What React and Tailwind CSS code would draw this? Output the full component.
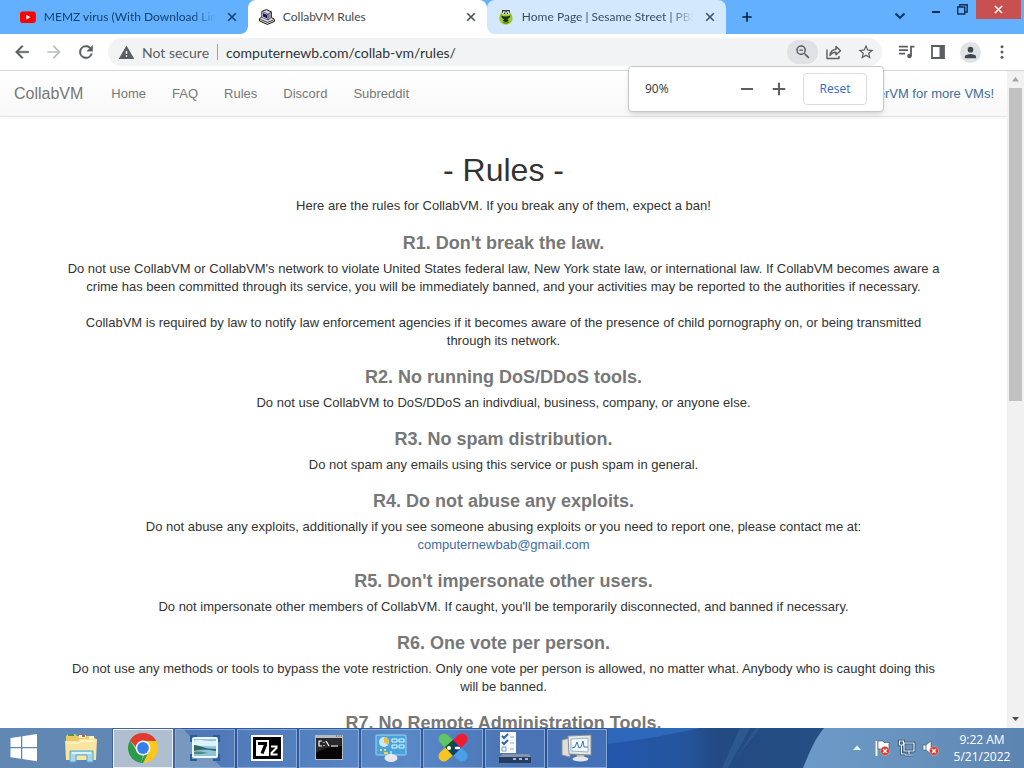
import React from "react";

function Svg({ children, className, size = 16, box = "0 0 24 24" }) {
  return (
    <svg width={size} height={size} viewBox={box} className={className} fill="currentColor" aria-hidden="true">
      {children}
    </svg>
  );
}

const closePath = "M19 6.4 17.6 5 12 10.6 6.4 5 5 6.4 10.6 12 5 17.6 6.4 19 12 13.4 17.6 19 19 17.6 13.4 12z";

function YouTubeIcon() {
  return (
    <svg width="16" height="16" viewBox="0 0 16 16" aria-hidden="true">
      <rect x="0" y="2.5" width="16" height="11.5" rx="2.8" fill="#f00" />
      <path d="M6.4 5.8v4.8l4.2-2.4z" fill="#fff" />
    </svg>
  );
}

function ComputerIcon() {
  return (
    <svg width="16" height="16" viewBox="0 0 16 16" aria-hidden="true">
      <path d="M1.600 8.800 3 8V2.300L7.500.5l5 2.300v5.700l3 1.700v2.300L8.500 15.500.5 12V9.500z" fill="#d9d6d0" stroke="#14141c" strokeWidth="1" />
      <path d="M3 2.400 9 5v6L3 8.300z" fill="#f2f1ec" stroke="#222" strokeWidth=".6" />
      <path d="M4 3.900 8.200 5.700v3.700L4 7.600z" fill="#14108c" />
      <path d="M9 5l3.500-2v5.500L9 11z" fill="#9a98a5" stroke="#222" strokeWidth=".5" />
      <path d="m1.500 10.500 7 3 6-2.500" fill="none" stroke="#33323a" strokeWidth=".9" />
    </svg>
  );
}

function SesameIcon() {
  return (
    <svg width="16" height="16" viewBox="0 0 16 16" aria-hidden="true">
      <circle cx="8" cy="9" r="6.8" fill="#9cc62b" />
      <path d="M4 1h8v3H4z" fill="#26382a" />
      <circle cx="6.2" cy="4" r="1.700" fill="#fff" />
      <circle cx="9.8" cy="4" r="1.700" fill="#fff" />
      <circle cx="6.5" cy="4.2" r=".8" />
      <circle cx="9.5" cy="4.2" r=".8" />
      <path d="M3.400 6.400c3 1.600 6.200 1.600 9.200-.2-.2 2.400-1.400 3.400-3.400 3.800 1.200.6 1.600 1.400 1.200 2.400-1.400 1.200-4.400.8-5.600-.8 1-.2 1.600-.6 1.400-1.200-1.600-.6-2.600-1.800-2.800-4z" fill="#1c3415" />
      <path d="M5.400 13.600c2 .8 4 .6 5.600-.4" stroke="#3f6c13" fill="none" />
    </svg>
  );
}

function Tab({ icon, title, style, fade }) {
  return (
    <div className={"flex h-[34px] w-[239px] shrink-0 items-center gap-2 pl-[11px] pr-2 font-['Lato','Open_Sans',sans-serif] text-[12px] " + style}>
      {icon}
      <span className={"w-[174px] overflow-hidden whitespace-nowrap " + (fade ? "[mask-image:linear-gradient(to_right,black_86%,transparent)]" : "")}>
        {title}
      </span>
      <button aria-label={"Close " + title} className="ml-auto flex size-4 items-center justify-center">
        <Svg size={14}><path d={closePath} stroke="currentColor" strokeWidth=".8" /></Svg>
      </button>
    </div>
  );
}

function TabStrip() {
  return (
    <header className="flex h-[34px] shrink-0 bg-[#62b0fe] text-[#12365c]">
      <div className="flex w-[248px] shrink-0 bg-white">
        <div className="flex w-full rounded-br-lg bg-[#62b0fe]">
          <Tab icon={<YouTubeIcon />} title="MEMZ virus (With Download Link)" fade style="ml-[9px] text-[#12406f]" />
        </div>
      </div>
      <Tab icon={<ComputerIcon />} title="CollabVM Rules" style="rounded-t-lg bg-white text-[#45494d]" />
      <div className="flex shrink-0 bg-linear-to-b from-[#62b0fe] from-50% to-white to-50%">
        <Tab icon={<SesameIcon />} title="Home Page | Sesame Street | PBS KIDS" fade style="rounded-t-lg rounded-bl-lg bg-[#d3e8fd] text-[#3b4d60]" />
      </div>
      <button aria-label="New tab" className="ml-[13px] flex w-4 items-center justify-center text-[#0b2039]">
        <Svg size={20}><path d="M19 13.2h-5.8V19h-2.4v-5.8H5v-2.4h5.8V5h2.4v5.8H19z" /></Svg>
      </button>
      <div className="ml-auto flex items-start">
        <button aria-label="Search tabs" className="flex h-8 w-6 items-center justify-center text-[#0f3868]">
          <svg width="12" height="8" viewBox="0 0 12 8" fill="none" stroke="currentColor" strokeWidth="2" aria-hidden="true"><path d="m1.5 1.5 4.5 4.3 4.5-4.3" /></svg>
        </button>
        <button aria-label="Minimize" className="ml-3 flex h-6 w-6 items-center justify-center">
          <span className="h-[2px] w-2 bg-[#102f52]" />
        </button>
        <button aria-label="Restore" className="flex h-[18px] w-7 items-center justify-center text-[#102f52]">
          <svg width="11" height="11" viewBox="0 0 11 11" fill="none" stroke="currentColor" strokeWidth="1.4" aria-hidden="true"><path d="M.7 3h7v7h-7zM2.8 3V.8h7.4V8H7.8" /></svg>
        </button>
        <button aria-label="Close" className="mr-[3px] flex h-[19px] w-[45px] items-center justify-center bg-[#c75050] text-white">
          <Svg size={13}><path d={closePath} stroke="currentColor" /></Svg>
        </button>
      </div>
    </header>
  );
}

function Toolbar() {
  const btn = "flex size-8 shrink-0 items-center justify-center";
  return (
    <div className="flex h-[37px] shrink-0 items-center border-b border-[#d5d6d8] bg-white pl-[6px] pr-[6px] text-[#5a5e62]">
      <button aria-label="Back" className={btn}><Svg size={20}><path d="M20 11H7.8l5.6-5.6L12 4l-8 8 8 8 1.4-1.4L7.8 13H20z" stroke="currentColor" strokeWidth=".5" /></Svg></button>
      <button aria-label="Forward" className={btn + " text-[#babcbe]"}><Svg size={20}><path d="m12 4-1.4 1.4 5.6 5.6H4v2h12.2l-5.6 5.6L12 20l8-8z" /></Svg></button>
      <button aria-label="Reload" className={btn}><Svg size={20}><path d="M17.6 6.4A8 8 0 1 0 19.7 14h-2.1A6 6 0 1 1 12 6c1.7 0 3.1.7 4.2 1.8L13 11h7V4z" stroke="currentColor" strokeWidth=".5" /></Svg></button>
      <div className="ml-[6px] flex h-7 min-w-0 flex-1 items-center rounded-full bg-[#f1f3f4] pl-[10px] font-['Lato','Open_Sans',sans-serif] text-[14px]">
        <Svg size={17}><path fillRule="evenodd" d="M1 21h22L12 2zm12-3h-2v-2h2zm0-4h-2v-4h2z" /></Svg>
        <span className="ml-[7px] whitespace-nowrap">Not secure</span>
        <span className="mx-2 h-4 w-px bg-[#9aa0a6]" />
        <input aria-label="Address" defaultValue="computernewb.com/collab-vm/rules/" className="min-w-0 flex-1 bg-transparent text-[#303336] outline-none" />
        <button aria-label="Zoom" className="flex h-6 w-[31px] items-center justify-center rounded-full bg-[#dfe1e4]">
          <Svg size={18}><path d="M15.5 14h-.8l-.3-.3A6.5 6.5 0 1 0 13.7 14.4l.3.3v.8l5 5 1.5-1.5zm-6 0a4.5 4.5 0 1 1 0-9 4.500 4.500 0 0 1 0 9zM7 8.800h5v1.400H7z" /></Svg>
        </button>
        <button aria-label="Share" className={btn}>
          <svg width="16" height="16" viewBox="0 0 16 16" fill="none" stroke="currentColor" strokeWidth="1.400" aria-hidden="true"><path d="M1 5.500v9h12V12M4 11.500c.4-4 2.500-6 6-6.300V2.500l4.500 4.200L10 10.800V8.300c-3 0-4.600 1-6 3.200z" strokeLinejoin="round" /></svg>
        </button>
        <button aria-label="Bookmark" className={btn}>
          <Svg size={18}><path d="m22 9.240-7.190-.620L12 2 9.190 8.630 2 9.240l5.460 4.730L5.820 21 12 17.270 18.180 21l-1.630-7.030zM12 15.400l-3.760 2.270 1-4.280-3.320-2.880 4.380-.380L12 6.100l1.710 4.040 4.380.38-3.320 2.880 1 4.280z" /></Svg>
        </button>
      </div>
      <button aria-label="Media" className="ml-2 flex size-8 items-center justify-center">
        <svg width="17" height="14" viewBox="0 0 17 14" aria-hidden="true"><path d="M1 1.700h9M1 5.200h9M1 8.700h6M13 11V1.700h3.500" stroke="currentColor" strokeWidth="1.800" fill="none" /><circle cx="11.500" cy="11" r="2.300" fill="currentColor" /></svg>
      </button>
      <button aria-label="Side panel" className={btn}>
        <svg width="14" height="14" viewBox="0 0 14 14" aria-hidden="true"><path d="M1 1h12v12H1z" fill="none" stroke="currentColor" strokeWidth="1.800" /><path d="M8.500 1H13v12H8.500z" fill="currentColor" /></svg>
      </button>
      <button aria-label="Profile" className={btn}>
        <span className="flex size-[21px] items-center justify-center rounded-full bg-[#dfe3e7] text-[#43484f]"><Svg size={17}><path d="M12 12a4 4 0 1 0 0-8 4 4 0 0 0 0 8zm0 2c-2.700 0-8 1.300-8 4v2h16v-2c0-2.700-5.300-4-8-4z" /></Svg></span>
      </button>
      <button aria-label="Menu" className={btn}><Svg size={18}><circle cx="12" cy="5" r="2" /><circle cx="12" cy="12" r="2" /><circle cx="12" cy="19" r="2" /></Svg></button>
    </div>
  );
}

function ZoomBubble() {
  return (
    <div className="absolute right-[140px] top-[66px] z-10 flex h-[46px] w-64 items-center rounded-[4px] border border-[#c4c6c8] bg-white pl-4 pr-4 text-xs text-[#303236] shadow-md">
      <span>90%</span>
      <button aria-label="Zoom out" className="ml-auto flex size-8 items-center justify-center"><span className="h-[2px] w-3 bg-[#5a5e62]" /></button>
      <button aria-label="Zoom in" className="mr-2 flex size-8 items-center justify-center text-[#5a5e62]"><Svg size={20}><path d="M19.500 13.200h-6.300v6.300h-2.400v-6.300H4.500v-2.400h6.300V4.500h2.400v6.300h6.300z" /></Svg></button>
      <button className="h-8 w-16 rounded-[4px] border border-[#dadce0] text-[#3068cc]">Reset</button>
    </div>
  );
}

const rules = [
  ["R1. Don't break the law.", [
    "Do not use CollabVM or CollabVM's network to violate United States federal law, New York state law, or international law. If CollabVM becomes aware a crime has been committed through its service, you will be immediately banned, and your activities may be reported to the authorities if necessary.",
    "CollabVM is required by law to notify law enforcement agencies if it becomes aware of the presence of child pornography on, or being transmitted through its network.",
  ]],
  ["R2. No running DoS/DDoS tools.", ["Do not use CollabVM to DoS/DDoS an indivdiual, business, company, or anyone else."]],
  ["R3. No spam distribution.", ["Do not spam any emails using this service or push spam in general."]],
  ["R4. Do not abuse any exploits.", ["Do not abuse any exploits, additionally if you see someone abusing exploits or you need to report one, please contact me at:"], "computernewbab@gmail.com"],
  ["R5. Don't impersonate other users.", ["Do not impersonate other members of CollabVM. If caught, you'll be temporarily disconnected, and banned if necessary."]],
  ["R6. One vote per person.", ["Do not use any methods or tools to bypass the vote restriction. Only one vote per person is allowed, no matter what. Anybody who is caught doing this will be banned."]],
  ["R7. No Remote Administration Tools.", []],
];

function Page() {
  return (
    <div className="flex min-h-0 flex-1 bg-white font-['Liberation_Sans',Arial,sans-serif] text-[13px] leading-[18px] text-[#333]">
      <div className="min-w-0 flex-1 overflow-hidden">
        <nav className="flex h-[46px] items-center border-b border-[#e4e4e4] bg-linear-to-b from-white to-[#f8f8f8] pl-[14px] pr-[13px] text-[#777] shadow-xs">
          <a href="#top" className="mr-7 text-[16px]">CollabVM</a>
          <div className="flex gap-[26px]">
            {["Home", "FAQ", "Rules", "Discord", "Subreddit"].map((n) => <a key={n} href={"#" + n}>{n}</a>)}
          </div>
          <a href="#uservm" className="ml-auto text-[#3d6f9c]">Check out UserVM for more VMs!</a>
        </nav>
        <main className="mx-auto max-w-[878px] pt-[34px] text-center">
          <h1 className="text-[32px] leading-[38px]">- Rules -</h1>
          <p className="mb-[18px] mt-2">Here are the rules for CollabVM. If you break any of them, expect a ban!</p>
          <div className="flex flex-col gap-[17px]">
            {rules.map(([title, paragraphs, mail]) => (
              <section key={title}>
                <h2 className="text-[18px] font-bold leading-5 text-[#777]">{title}</h2>
                <div className="mt-[7px] flex flex-col gap-[18px]">
                  {paragraphs.map((p) => (
                    <p key={p}>{p}{mail && <a href={"mailto:" + mail} className="block text-[#3a6ea8]">{mail}</a>}</p>
                  ))}
                </div>
              </section>
            ))}
          </div>
        </main>
      </div>
      <div className="flex w-[17px] shrink-0 flex-col items-center bg-[#f1f1f1]">
        <svg width="17" height="17" viewBox="0 0 17 17" aria-hidden="true"><path d="M8.500 6 12 10.500H5z" fill="#a3a3a3" /></svg>
        <div className="h-[313px] w-[13px] bg-[#c1c1c1]" />
        <svg className="mt-auto" width="17" height="17" viewBox="0 0 17 17" aria-hidden="true"><path d="M5 6h7l-3.500 4z" fill="#505050" /></svg>
      </div>
    </div>
  );
}

function WindowsIcon() {
  return <svg width="28" height="28" viewBox="0 0 28 28" aria-hidden="true"><path d="M.5 4 11 2.500V13H.5zM12.300 2.300 27 0v13H12.300zM.5 14.300H11v10.500L.5 23.200zM12.300 14.300H27v13l-14.700-2.300z" fill="#fff" /></svg>;
}
function FolderIcon() {
  return (
    <svg width="34" height="32" viewBox="0 0 34 32" aria-hidden="true">
      <path d="M2 4 4 2h7l2 2h16l3 3v21H2z" fill="#e9c867" /><path d="M4 2h6v2H4z" fill="#4a9a55" /><path d="M15 3h7v3h-7zM25 4h5v3h-5z" fill="#fff4cf" /><path d="M18 3h3v2h-3z" fill="#cf5a3a" /><path d="M23 7h4v1.500h-4z" fill="#4f98c4" />
      <path d="M1 9h13l2-2h17l-1 21H2z" fill="#f8e5a0" /><path d="M3 11h12l2-2h14" stroke="#fffbe0" fill="none" />
      <path d="M6 19h23v11h-6v-7H12v7H6z" fill="#a6d8f0" stroke="#5aa5cc" /><path d="M8 20h19v2H8z" fill="#d9f2fb" />
    </svg>
  );
}
function ChromeIcon() {
  return (
    <svg width="32" height="32" viewBox="0 0 32 32" aria-hidden="true">
      <path d="M16 16 3 8.500A15 15 0 0 1 29 8.500z" fill="#df3c30" /><path d="M16 9h13.200A15 15 0 0 1 16 31l6-12z" fill="#fcc61b" /><path d="M3 8.500 9.900 19.500 16 23l-2 7.900A15 15 0 0 1 3 8.500z" fill="#2b9a49" /><path d="m22 19.500-6 11.500h-2l3-8z" fill="#2b9a49" />
      <path d="M3 8.500A15 15 0 0 1 29 9H16l-6 7z" fill="#df3c30" /><circle cx="16" cy="16" r="7.400" fill="#fff" /><circle cx="16" cy="16" r="5.900" fill="#3280e8" />
    </svg>
  );
}
function PictureIcon() {
  return (
    <svg width="32" height="32" viewBox="0 0 32 32" aria-hidden="true">
      <path d="M2 22v6h6M24 28h6v-6M24 4h6v6M8 4H2v6" fill="none" stroke="#23609a" strokeWidth="2" />
      <rect x="3" y="5" width="26" height="21" rx="2.500" fill="#eef7fb" />
      <path d="M5 7h22v10H5z" fill="#8dc6ea" /><path d="M5 9c6-3 10 1 22 0v5c-8 1-14-1-22 1z" fill="#dff1fb" />
      <path d="M5 13c6 0 9 4 22 4v3H5z" fill="#2f6a5c" /><path d="M5 19c9-2 14-1 22 0v5H5z" fill="#8fc3d6" /><path d="M5 20c6-1 9 0 14 1-5 1-9 1-14 1z" fill="#4c8a86" />
    </svg>
  );
}
function SevenZipIcon() {
  return (
    <svg width="32" height="26" viewBox="0 0 32 26" aria-hidden="true">
      <path d="M0 0h32v26H0z" fill="#fff" /><path d="M2 2h28v22H2z" fill="#000" /><path d="M5 5h13v16H5z" fill="#fff" />
      <path d="M7 8.500h7.500v1.500L11 18.500" stroke="#000" strokeWidth="3.200" fill="none" /><path d="M20 11.500h5.500v1.500L20.500 18v1.500h6" stroke="#fff" strokeWidth="2" fill="none" />
    </svg>
  );
}
function TerminalIcon() {
  return (
    <svg width="30" height="26" viewBox="0 0 30 26" aria-hidden="true">
      <path d="M1 0h28v25H1z" fill="#b9bcbf" /><path d="M2 3h26v21H2z" fill="#050505" /><path d="M2 3h26v8C18 11 10 13 2 18z" fill="#292929" /><path d="M22 1h1M24.500 1h1M27 1h1" stroke="#444" />
      <path d="M8 6H5v5h3M10 7v1M10 10v1M12 6l3 5M17 11h7" stroke="#fff" fill="none" strokeWidth="1.200" />
    </svg>
  );
}
function ControlPanelIcon() {
  return (
    <svg width="32" height="30" viewBox="0 0 32 30" aria-hidden="true">
      <rect x="1" y="2" width="30" height="20" rx="1" fill="#4aa4dc" stroke="#9cd4f4" /><circle cx="9" cy="9" r="5" fill="#cbe7f5" /><path d="M9 9V4a5 5 0 0 1 4 8z" fill="#f0b84a" />
      <path d="M17 6h5v3h-5zM24 6h5v3h-5zM17 12h5v3h-5zM24 12h5v3h-5z" fill="none" stroke="#e9f7ff" /><path d="M5 17h2M9 17h2M9 20h4" stroke="#f3cf62" strokeWidth="2" /><ellipse cx="16" cy="25" rx="6.500" ry="4" fill="#e5e8ea" /><path d="M16 18v4" stroke="#fff" />
    </svg>
  );
}
function PillsIcon() {
  return (
    <svg width="34" height="32" viewBox="0 0 34 32" aria-hidden="true" strokeWidth="11" strokeLinecap="round">
      <path d="M8 7 17 16" stroke="#5ec465" /><path d="M26 7 17 16" stroke="#ee1c2e" /><path d="M8 24 17 16" stroke="#f7c51e" /><path d="M26 24 17 16" stroke="#4ba0e8" />
      <path d="m9 15 8-7v16z" fill="#12502f" /><path d="m17 8 8 8-8 8z" fill="#173b80" /><circle cx="13" cy="16" r="2" fill="#fff" /><path d="M20 16h3" stroke="#fff" strokeWidth="2.500" />
    </svg>
  );
}
function ChecklistIcon() {
  return (
    <svg width="34" height="34" viewBox="0 0 34 34" aria-hidden="true">
      <path d="M2 1h16v21H2z" fill="#f6f8fa" /><path d="m4 5 2 2 4-4M4 11l2 2 4-4" stroke="#2869a8" strokeWidth="2" fill="none" /><path d="M4 16h4v4H4z" fill="none" stroke="#7ba0c0" /><path d="M12 6h4M12 12h4M12 18h4" stroke="#a2adb8" />
      <path d="M5 23h26l2 3H1z" fill="#8193ad" /><path d="M1 26h32v6H1z" fill="#263c60" /><path d="M15 28h3M21 28h3M27 28h3" stroke="#a9bbd3" strokeWidth="2" />
    </svg>
  );
}
function MonitorIcon() {
  return (
    <svg width="34" height="30" viewBox="0 0 34 30" aria-hidden="true">
      <path d="m2 7 8-2v19l-8-2z" fill="#dedfd9" stroke="#8b9094" /><path d="m8 3 23-1v20l-22-1z" fill="#e7e9e6" stroke="#8b9094" /><path d="m11 6 17-1v14l-17-1z" fill="#f4fafe" stroke="#90b4cc" />
      <path d="m12 15 3-1 2-5 2 6 2-1 2-6 1 6h4" stroke="#327cb7" fill="none" /><path d="M17 22h7l1 3H16z" fill="#b8bec0" /><ellipse cx="20.500" cy="26" rx="8" ry="2.500" fill="#e5e8e7" />
    </svg>
  );
}

const idle = "bg-white/15 border-[#88a9d6]";
const apps = [
  ["Google Chrome", ChromeIcon, "bg-[#b0bfcf] border-[#eef2f6]"],
  ["Pictures", PictureIcon, idle],
  ["7-Zip", SevenZipIcon, idle],
  ["Command Prompt", TerminalIcon, idle],
  ["Control Panel", ControlPanelIcon, idle],
  ["Multi tool", PillsIcon, idle],
  ["Program list", ChecklistIcon, idle],
  ["System monitor", MonitorIcon, idle],
];

function ErrorMark({ x, y }) {
  return <g><circle cx={x} cy={y} r="4.500" fill="#d6382f" stroke="#f3b0aa" strokeWidth=".6" /><path d={`M${x - 2} ${y - 2}l4 4m0-4l-4 4`} stroke="#fff" strokeWidth="1.400" /></g>;
}

function Taskbar() {
  return (
    <footer className="relative flex h-10 shrink-0 items-center overflow-hidden bg-[#2c5ba6]">
      <svg className="absolute inset-0 size-full" viewBox="0 0 1024 40" preserveAspectRatio="none" aria-hidden="true">
        <defs>
          <linearGradient id="base" x1="0" x2="1"><stop offset="0" stopColor="#6088b2" /><stop offset=".17" stopColor="#6187b6" /><stop offset=".18" stopColor="#315fa9" /><stop offset=".4" stopColor="#3d74bd" /><stop offset=".5" stopColor="#2c5ca7" /><stop offset=".6" stopColor="#2257ab" /><stop offset=".67" stopColor="#24549c" /><stop offset=".7" stopColor="#234a82" /><stop offset="1" stopColor="#29578d" /></linearGradient>
          <linearGradient id="light" x1="0" x2="1"><stop offset="0" stopColor="#6c9ac8" /><stop offset=".5" stopColor="#6892bd" /><stop offset="1" stopColor="#5c84b0" /></linearGradient>
        </defs>
        <path d="M0 0h1024v40H0z" fill="url(#base)" />
        <path d="M174 0h8l40 40h-48z" fill="#6187b6" />
        <path d="M606 16C640 12 665 8 700 0h-94z" fill="#2f68bb" /><path d="M740 0h10l-22 40h-6zM756 0h4l-24 30z" fill="#35669e" opacity=".5" />
        <path d="M824 0h200v40H803c6-14 11-28 21-40z" fill="url(#light)" />
      </svg>
      <div className="relative flex w-full items-center">
        <button aria-label="Start" className="flex h-10 w-12 items-center justify-center"><WindowsIcon /></button>
        <button aria-label="File Explorer" className="flex h-10 w-[65px] items-center justify-center"><FolderIcon /></button>
        <div className="flex gap-[2px]">
          {apps.map(([name, Icon, look]) => (
            <button key={name} aria-label={name} className={"flex h-[39px] w-[60px] items-center justify-center border outline outline-[#294f87]/60 " + look}><Icon /></button>
          ))}
        </div>
        <div className="ml-auto flex items-center">
          <svg width="10" height="6" viewBox="0 0 10 6" aria-hidden="true"><path d="M5 .5 9 5H1z" fill="#e8f2fa" /></svg>
          <svg className="ml-3" width="18" height="18" viewBox="0 0 18 18" aria-hidden="true"><path d="M2.500 2v15" stroke="#fff" strokeWidth="1.800" /><path d="M4 2h5l1 1.500h5V10H4z" fill="#fff" stroke="#28486b" strokeWidth=".6" /><ErrorMark x={11} y={12} /></svg>
          <svg className="ml-[6px]" width="18" height="18" viewBox="0 0 18 18" fill="none" aria-hidden="true"><path d="M6 4h10v8H6zM11 12v3M7 16h8M1.500 2h4v4h-4zM3.500 6v9h4" stroke="#21405f" strokeWidth="2.600" /><path d="M6 4h10v8H6zM11 12v3M7 16h8M1.500 2h4v4h-4zM3.500 6v9h4" stroke="#f6fbff" strokeWidth="1.200" /></svg>
          <svg className="ml-[6px]" width="18" height="18" viewBox="0 0 18 18" aria-hidden="true"><path d="M1 6h3l5-4v13l-5-4H1z" fill="#fff" stroke="#31506f" strokeWidth=".6" /><path d="M4 5v7" stroke="#587da2" /><ErrorMark x={12} y={12} /></svg>
          <div className="ml-2 mr-2 w-[68px] text-center text-xs leading-[17px] text-white"><div>9:22 AM</div><div>5/21/2022</div></div>
        </div>
      </div>
    </footer>
  );
}

export default function App() {
  return (
    <div className="relative flex h-screen flex-col overflow-hidden font-['Open_Sans','Noto_Sans',sans-serif]">
      <TabStrip />
      <Toolbar />
      <ZoomBubble />
      <Page />
      <Taskbar />
    </div>
  );
}
